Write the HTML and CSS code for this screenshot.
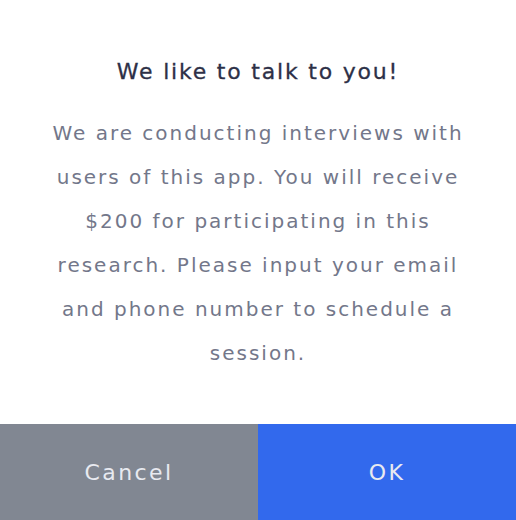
FILE: index.html
```html
<!DOCTYPE html>
<html lang="en">
<head>
    <meta charset="UTF-8">
    <meta name="viewport" content="width=device-width, initial-scale=1.0">
    <title>Interview invite</title>
    <link rel="stylesheet" href="styles.css">
</head>
<body>
    <div class="dialog">
        <div class="content">
            <h2 class="title">We like to talk to you!</h2>
            <p class="message">We are conducting interviews with users of this app. You will receive $200 for participating in this research. Please input your email and phone number to schedule a session.</p>
        </div>
        <div class="actions">
            <button class="btn cancel">Cancel</button>
            <button class="btn ok">OK</button>
        </div>
    </div>
</body>
</html>
```

FILE: styles.css
```css
body {
    margin: 0;
    font-family: 'DejaVu Sans', sans-serif;
    background: #fff;
}
.dialog {
    width: 516px;
    height: 520px;
    display: flex;
    flex-direction: column;
}
.content {
    flex: 1;
    padding: 58px 40px 0;
    text-align: center;
}
.title {
    margin: 0;
    font-size: 22px;
    line-height: 28px;
    font-weight: 500;
    letter-spacing: 1.8px;
    color: #2d3047;
    -webkit-text-stroke: 0.3px #2d3047;
}
.message {
    margin: 25px 0 0;
    font-size: 20px;
    line-height: 44px;
    letter-spacing: 2px;
    color: #73778a;
}
.actions {
    display: grid;
    grid-template-columns: 1fr 1fr;
    height: 96px;
}
.btn {
    border: none;
    font-family: 'DejaVu Sans', sans-serif;
    font-size: 22px;
    letter-spacing: 2.4px;
    color: #e8eaf0;
    cursor: pointer;
}
.cancel { background-color: #818792; }
.ok { background-color: #3269ed; }
```
